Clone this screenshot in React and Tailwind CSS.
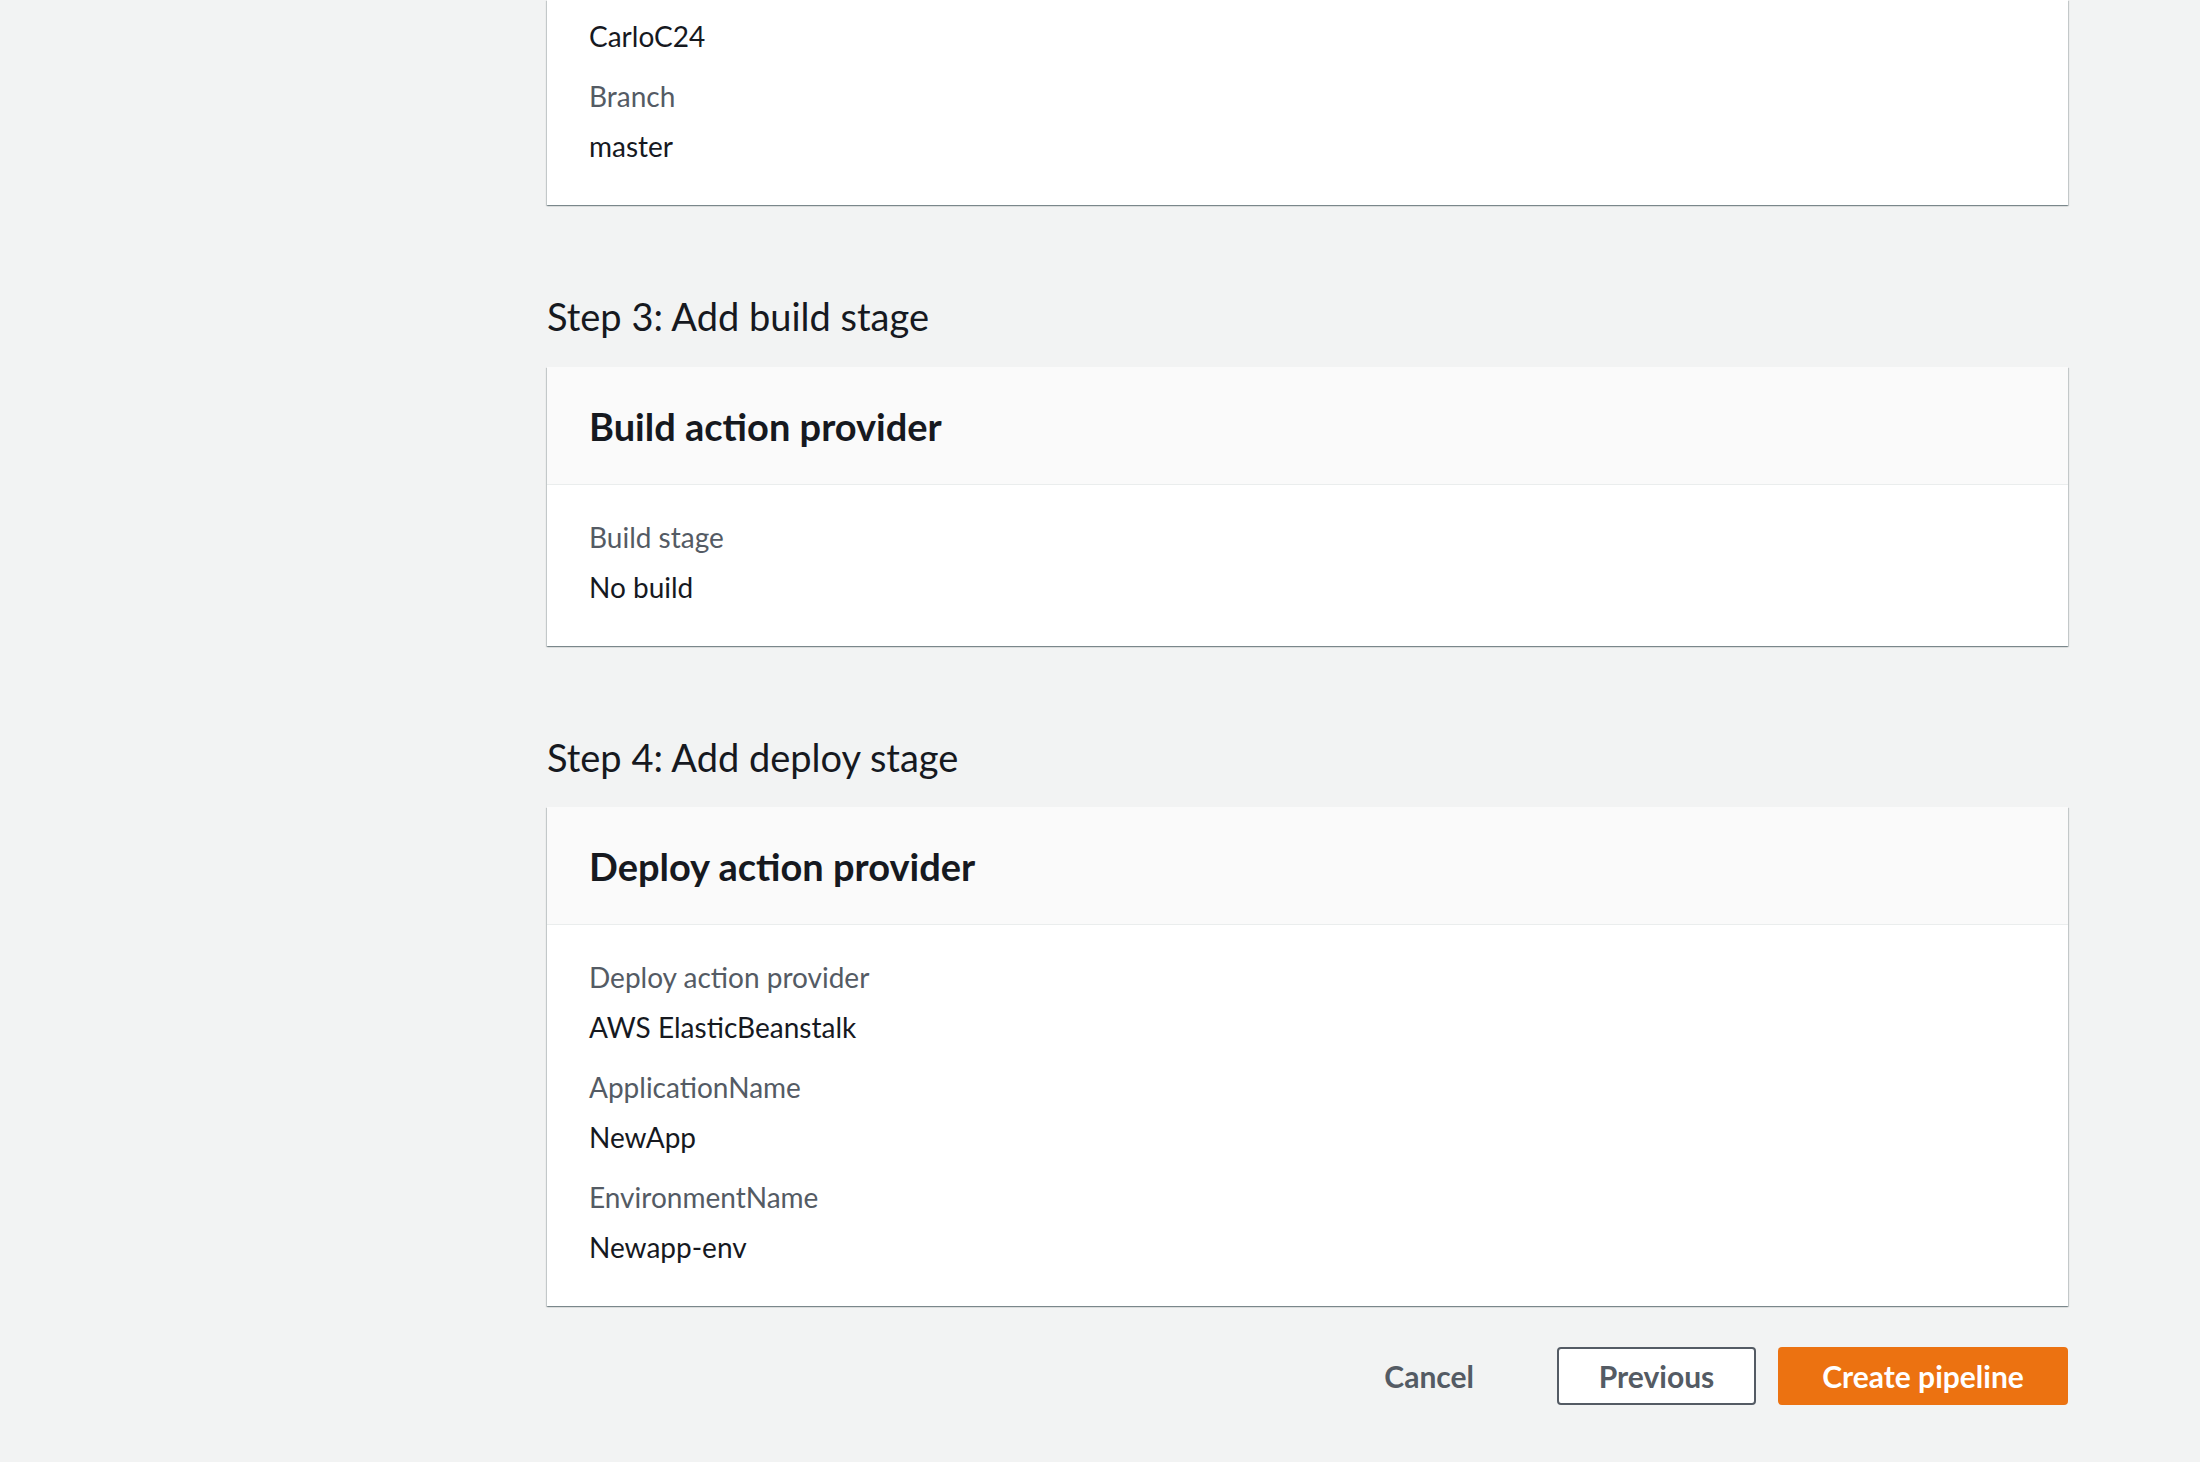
const cardShadow =
  'shadow-[0_1px_1px_0_rgba(0,28,36,0.3),1px_1px_1px_0_rgba(0,28,36,0.15),-1px_1px_1px_0_rgba(0,28,36,0.15)]';

const Field = ({ label, value, first }) => (
  <div className={first ? '' : 'mt-[20px]'}>
    <div className="text-[28px] leading-[40px] text-[#545b64]">{label}</div>
    <div className="mt-[10px] text-[28px] leading-[40px] text-[#16191f]">{value}</div>
  </div>
);

const Card = ({ title, fields }) => (
  <div className={`bg-white ${cardShadow}`}>
    <div className="h-[118px] flex items-center px-[42px] bg-[#fafafa] border-b border-[#eaeded]">
      <h3 className="text-[38px] font-bold text-[#16191f] leading-[48px]">{title}</h3>
    </div>
    <div className="px-[42px] pt-[32px] pb-[39px]">
      {fields.map((f, i) => (
        <Field key={f.label} label={f.label} value={f.value} first={i === 0} />
      ))}
    </div>
  </div>
);

export default function App() {
  return (
    <div
      className="min-h-screen bg-[#f2f3f3] pl-[547px]"
      style={{ fontFamily: 'Lato, "Open Sans", Arial, sans-serif' }}
    >
      <div className="w-[1521px]">
        {/* source step card (cut off at top) */}
        <div className={`bg-white ${cardShadow} px-[42px] pt-[16px] pb-[39px]`}>
          <div className="text-[28px] leading-[40px] text-[#16191f]">CarloC24</div>
          <Field label="Branch" value="master" />
        </div>

        <h2 className="mt-[87px] mb-[27px] text-[38px] leading-[48px] text-[#16191f]">
          Step 3: Add build stage
        </h2>
        <Card title="Build action provider" fields={[{ label: 'Build stage', value: 'No build' }]} />

        <h2 className="mt-[87px] mb-[26px] text-[38px] leading-[48px] text-[#16191f]">
          Step 4: Add deploy stage
        </h2>
        <Card
          title="Deploy action provider"
          fields={[
            { label: 'Deploy action provider', value: 'AWS ElasticBeanstalk' },
            { label: 'ApplicationName', value: 'NewApp' },
            { label: 'EnvironmentName', value: 'Newapp-env' },
          ]}
        />

        <div className="mt-[41px] flex justify-end items-center gap-[22px]">
          <button className="h-[58px] px-[40px] mr-[21px] text-[30px] font-bold text-[#545b64]">Cancel</button>
          <button className="h-[58px] w-[199px] rounded-[4px] border-2 border-[#545b64] bg-white text-[30px] font-bold text-[#545b64]">
            Previous
          </button>
          <button className="h-[58px] w-[290px] rounded-[4px] bg-[#ec7211] text-[30px] font-bold text-white">
            Create pipeline
          </button>
        </div>
      </div>
    </div>
  );
}
